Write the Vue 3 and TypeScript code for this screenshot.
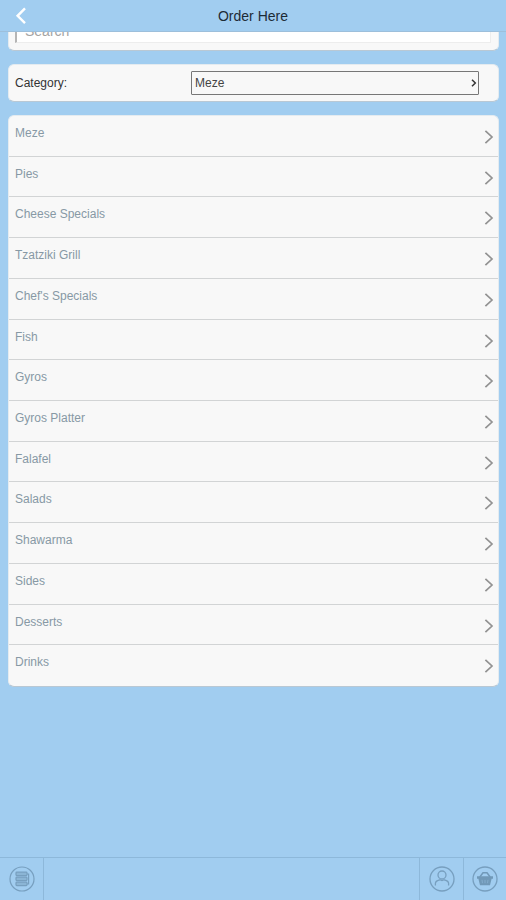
<script setup lang="ts">
import { ref } from 'vue'

const categories: string[] = [
  'Meze',
  'Pies',
  'Cheese Specials',
  'Tzatziki Grill',
  "Chef's Specials",
  'Fish',
  'Gyros',
  'Gyros Platter',
  'Falafel',
  'Salads',
  'Shawarma',
  'Sides',
  'Desserts',
  'Drinks',
]

const search = ref('')
const selected = ref('Meze')
</script>

<template>
  <div class="page">
    <header class="topbar">
      <button class="back" type="button" aria-label="Back">
        <svg width="12" height="18" viewBox="0 0 12 18" aria-hidden="true">
          <path d="M10 1.4 L2.6 8.8 L10 16.2" fill="none" stroke="#fff" stroke-width="2.4" />
        </svg>
      </button>
      <h1 class="title">Order Here</h1>
    </header>

    <main class="content">
      <section class="card search-card">
        <input v-model="search" class="search" type="text" placeholder="Search" aria-label="Search" />
      </section>

      <section class="card filter">
        <label class="filter-label" for="category">Category:</label>
        <div class="select-wrap">
          <select id="category" v-model="selected" class="select">
            <option v-for="name in categories" :key="name">{{ name }}</option>
          </select>
          <svg class="select-arrow" width="6" height="8" viewBox="0 0 6 8" aria-hidden="true">
            <path d="M1 0.8 L4.3 4 L1 7.2" fill="none" stroke="#333" stroke-width="1.5" />
          </svg>
        </div>
      </section>

      <ul class="card list">
        <li v-for="name in categories" :key="name" class="item">
          <a class="row" href="#">
            <span>{{ name }}</span>
            <svg class="chevron" width="10" height="16" viewBox="0 0 10 16" aria-hidden="true">
              <path d="M1.4 1.8 L8 8 L1.4 14.2" fill="none" stroke="#929292" stroke-width="1.7" />
            </svg>
          </a>
        </li>
      </ul>
    </main>

    <nav class="tabbar">
      <button class="tab tab-menu" type="button" aria-label="Menu">
        <svg width="26" height="26" viewBox="0 0 26 26" aria-hidden="true">
          <g fill="none" stroke="#779fbf" stroke-width="1.2">
            <circle cx="13" cy="13" r="12" />
            <rect x="7" y="6.2" width="11" height="3.4" rx="0.8" fill="#8bb5d5" />
            <rect x="7" y="11.2" width="11" height="3.4" rx="0.8" fill="#8bb5d5" />
            <rect x="7" y="16.2" width="11" height="3.4" rx="0.8" fill="#8bb5d5" />
            <path d="M18 8 H19.6 V18 H18" />
          </g>
        </svg>
      </button>
      <button class="tab tab-user" type="button" aria-label="Account">
        <svg width="26" height="26" viewBox="0 0 26 26" aria-hidden="true">
          <g fill="none" stroke="#779fbf" stroke-width="1.3">
            <circle cx="13" cy="13" r="12" />
            <circle cx="13" cy="9" r="4" />
            <path d="M6.4 19.5 V17.3 Q6.6 15 9.2 14.3 L11 13.8 Q13 15.2 15 13.8 L16.8 14.3 Q19.4 15 19.6 17.3 V19.5" />
          </g>
        </svg>
      </button>
      <button class="tab" type="button" aria-label="Basket">
        <svg width="26" height="26" viewBox="0 0 26 26" aria-hidden="true">
          <circle cx="13" cy="13" r="12" fill="none" stroke="#779fbf" stroke-width="1.3" />
          <path d="M7.8 11 L11 6.8 H15 L18.2 11" fill="none" stroke="#7199b8" stroke-width="1.5" />
          <path d="M5 10.2 H21 V12.8 H19.6 L18 19.2 H8 L6.4 12.8 H5 Z" fill="#7199b8" />
          <path d="M10 13.8 L10.5 17.2 M13 13.8 V17.2 M16 13.8 L15.5 17.2" stroke="#86afcf" stroke-width="0.9" />
        </svg>
      </button>
    </nav>
  </div>
</template>

<style>
body {
  margin: 0;
  background: #a1cdf0;
}
</style>

<style scoped>
.page {
  display: flex;
  flex-direction: column;
  height: 100vh;
  overflow: hidden;
  background: #a1cdf0;
  color: #333;
  font-family: "Liberation Sans", Arial, sans-serif;
  font-size: 12px;
}

.page * {
  box-sizing: border-box;
}

.topbar {
  display: grid;
  grid-template-columns: 44px 1fr 44px;
  align-items: center;
  flex: none;
  height: 32px;
  border-bottom: 1px solid #9dbfdb;
}

.back {
  display: flex;
  padding: 0 0 0 15px;
  border: 0;
  background: none;
}

.title {
  margin: 0;
  color: #1d2b36;
  font-size: 14px;
  font-weight: 400;
  line-height: 18px;
  text-align: center;
}

.content {
  display: flex;
  flex: 1;
  flex-direction: column;
  gap: 13px;
  min-height: 0;
  padding: 0 7px 0 8px;
  overflow: hidden;
}

.card {
  flex: none;
  border: 1px solid #e4ebf0;
  border-bottom-color: #b9c8d4;
  border-radius: 6px;
  background: #f8f8f8;
}

/* The search card is scrolled partly beneath the top bar. */
.search-card {
  margin-top: -21px;
  padding: 7px 7px 7px 6px;
}

.search {
  display: block;
  width: 100%;
  height: 24px;
  padding: 0 8px;
  border: 1px solid #ededed;
  border-left: 2px solid #b5b5b5;
  background: #fff;
  color: #333;
  font: inherit;
  font-size: 14px;
}

.search::placeholder {
  color: #a3a3a3;
  opacity: 1;
}

.filter {
  display: grid;
  grid-template-columns: 3fr 5fr;
  align-items: center;
  padding: 6px 19px 6px 6px;
}

.filter-label {
  line-height: 16px;
}

.select-wrap {
  position: relative;
  margin-left: 2px;
}

.select {
  display: block;
  width: 100%;
  height: 24px;
  padding: 0 16px 0 3px;
  border: 1px solid #777;
  border-radius: 1px;
  appearance: none;
  background: #f8f8f8;
  color: #444;
  font: inherit;
}

.select-arrow {
  position: absolute;
  top: 8px;
  right: 2px;
  pointer-events: none;
}

.list {
  display: grid;
  grid-auto-rows: 1fr;
  min-height: 572px;
  margin: 0;
  padding: 0;
  list-style: none;
}

.item {
  border-bottom: 1px solid #d2d4d5;
}

.item:last-child {
  border-bottom: 0;
}

.row {
  display: flex;
  justify-content: space-between;
  padding: 9px 4px 0 6px;
  color: #8799a5;
  line-height: 16px;
  text-decoration: none;
}

.chevron {
  margin-top: 4px;
}

.tabbar {
  display: flex;
  flex: none;
  height: 43px;
  border-top: 1px solid #8db8da;
}

.tab {
  display: flex;
  align-items: center;
  justify-content: center;
  width: 43px;
  padding: 0;
  border: 0;
  border-left: 1px solid #8db8da;
  background: none;
}

.tab-menu {
  width: 44px;
  border-right: 1px solid #8db8da;
  border-left: 0;
}

.tab-user {
  width: 44px;
  margin-left: auto;
}
</style>
